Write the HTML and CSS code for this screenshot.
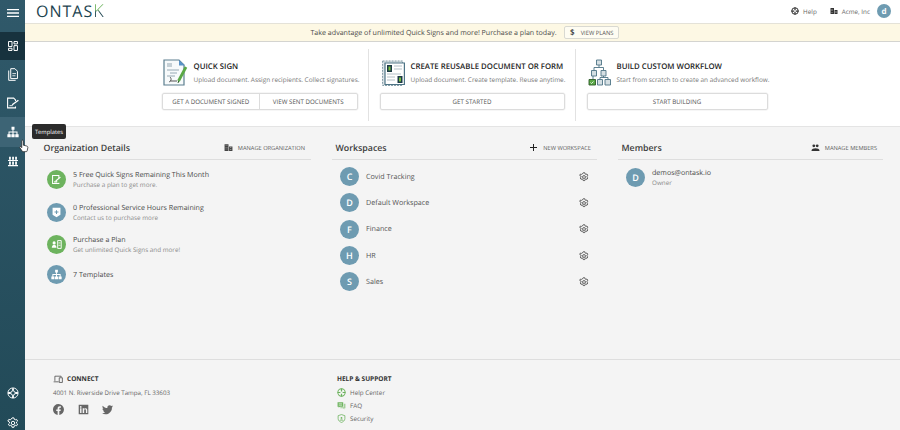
FILE: index.html
```html
<!DOCTYPE html>
<html lang="en">
<head>
<meta charset="utf-8">
<title>OnTask</title>
<link rel="stylesheet" href="styles.css">
</head>
<body>
<svg class="defs" width="0" height="0" aria-hidden="true">
  <defs>
    <symbol id="i-sitemap" viewBox="0 0 16 16"><path fill="currentColor" d="M6 1h4v4H8.600v2.200H14V11h1.500v4h-4.500v-4h1.600V8.600H8.700V11h1.500v4H5.800v-4h1.500V8.600H3.400V11H5v4H.5v-4H2V7.200h5.300V5H6z"/></symbol>
    <symbol id="i-gear" viewBox="0 0 16 16"><path fill="none" stroke="currentColor" stroke-width="1.300" d="M6.700 1.200h2.600l.4 1.900 1.300.7 1.800-.6 1.300 2.200-1.400 1.300v1.500l1.400 1.300-1.300 2.200-1.800-.6-1.300.7-.4 1.900H6.700l-.4-1.900-1.300-.7-1.800.6-1.300-2.200 1.400-1.300V6.700L1.100 5.400l1.300-2.200 1.800.6L5.500 3.100z"/><circle cx="8" cy="8" r="2.300" fill="none" stroke="currentColor" stroke-width="1.300"/></symbol>
    <symbol id="i-building" viewBox="0 0 16 16"><path fill="currentColor" d="M1 2h7v12H1zM9 6h6v8H9z"/><path fill="#f4f4f4" d="M3 4h1v1H3zM5 4h1v1H5zM3 7h1v1H3zM5 7h1v1H5zM3 10h1v1H3zM5 10h1v1H5zM11 8h2v1h-2zM11 11h2v1h-2z"/></symbol>
  </defs>
</svg>
<div class="app">
  <nav class="sidebar">
    <div class="nav-item nav-burger">
      <svg class="nav-burger-ico" viewBox="0 0 12 8"><path fill="#fff" d="M0 0h12v1.300H0zM0 3.350h12v1.300H0zM0 6.700h12V8H0z"/></svg>
    </div>
    <div class="nav-item nav-active">
      <svg class="nav-ico" viewBox="0 0 11 11"><path fill="none" stroke="#fff" stroke-width="1.100" d="M.6.600h3.800v5.500H.6zM6.600.600h3.800v2.600H6.600zM6.600 5.100h3.800v5.300H6.600zM.6 8h3.800v2.400H.6z"/></svg>
    </div>
    <div class="nav-item">
      <svg class="nav-ico-tall" viewBox="0 0 11 14"><path fill="none" stroke="#fff" stroke-width="1.100" d="M3 .6h4.600L10.400 3.400V11.500H3zM.8 2.600V13.400H8.400"/><path stroke="#fff" stroke-width=".9" d="M4.800 6h4M4.800 8.400h3.400"/></svg>
    </div>
    <div class="nav-item">
      <svg class="nav-ico-wide" viewBox="0 0 12 11"><path fill="none" stroke="#fff" stroke-width="1.100" d="M8.500 3.600V2.400L6.700.6H.6v9.800h7.900V9"/><path stroke="#fff" stroke-width="1.400" d="M5.200 7.300l6.200-4.600"/><path stroke="#fff" stroke-width=".9" d="M2.400 8.200h3.400"/></svg>
    </div>
    <div class="nav-item nav-hover">
      <svg class="nav-ico-wide" viewBox="0 0 16 16"><use href="#i-sitemap" color="#fff"/></svg>
    </div>
    <div class="nav-item nav-last">
      <svg class="nav-ico-tall" viewBox="0 0 14 14"><path fill="#fff" d="M0 5h14v1.200H0zM0 12h14v1.500H0zM1.500 .5h2.500v4H1.500zM5.800 .5h2.500v4H5.800zM10 .5h2.500v4H10zM1.500 7h2.500v4.500H1.500zM5.800 7h2.500v4.500H5.800zM10 7h2.500v4.500H10z"/></svg>
    </div>
    <div class="nav-spacer"></div>
    <div class="nav-item nav-foot">
      <svg class="nav-ico-wide" viewBox="0 0 16 16"><circle cx="8" cy="8" r="6.800" fill="none" stroke="#fff" stroke-width="1.200"/><circle cx="8" cy="8" r="2.900" fill="none" stroke="#fff" stroke-width="1.200"/><path stroke="#fff" stroke-width="2.400" d="M8 1.500v3.500M8 11v3.500M1.500 8H5M11 8h3.500"/></svg>
    </div>
    <div class="nav-item nav-foot nav-cut">
      <svg class="nav-ico-wide" viewBox="0 0 16 16"><use href="#i-gear" color="#fff"/></svg>
    </div>
  </nav>
  <div class="tooltip">Templates</div>
  <svg class="cursor" viewBox="0 0 12 16"><path fill="#fff" stroke="#222" stroke-width=".9" d="M3.500 1.200c.8-.6 1.700 0 1.700.8V7l4 1c1 .3 1.600 1 1.400 2l-.8 3.800c-.1.700-.6 1-1.200 1H5c-.5 0-.9-.2-1.200-.7L1 10c-.5-.9.600-1.800 1.400-1l.9 1V2c0-.3 0-.6.200-.8z"/></svg>

  <div class="content">
    <header class="topbar">
      <div class="logo">ONTAS<span class="logo-k">K</span></div>
      <div class="top-right">
        <span class="top-link"><svg class="top-ico" viewBox="0 0 16 16"><circle cx="8" cy="8" r="6.500" fill="none" stroke="#333" stroke-width="2"/><path stroke="#333" stroke-width="2.500" d="M8 1v14M1 8h14"/><circle cx="8" cy="8" r="2" fill="#fff"/></svg>Help</span>
        <span class="top-link"><svg class="top-ico" viewBox="0 0 16 16"><use href="#i-building" color="#333"/></svg>Acme, Inc</span>
        <span class="avatar-small">d</span>
      </div>
    </header>
    <div class="banner">
      <span>Take advantage of unlimited Quick Signs and more! Purchase a plan today.</span>
      <span class="plans-btn"><b class="dollar">$</b>VIEW PLANS</span>
    </div>
    <section class="actions">
      <div class="action action-1">
        <div class="action-head">
          <svg class="action-ico ico-a" viewBox="0 0 25 27">
            <path fill="#f7fafb" stroke="#5c7f8f" stroke-width="1.200" d="M1 1h15l5 5v20H1z"/>
            <path fill="#5a93c8" d="M16 1l6 5.500h-6z"/>
            <path fill="#c5d0d6" d="M4 4h5v4H4z"/>
            <path stroke="#8aa0ab" stroke-width=".9" d="M4 11h12M7 14h7M4 17h8"/>
            <path fill="none" stroke="#444" stroke-width=".9" d="M7 18c2 2 1 4-1 5M7 22h7"/>
            <path stroke="#5aa845" stroke-width="2.800" d="M15.500 22l7.500-14"/>
            <path stroke="#2c5a28" stroke-width="1" d="M15 24l.7-2"/>
          </svg>
          <div class="action-text">
            <div class="action-title">QUICK SIGN</div>
            <div class="action-sub">Upload document. Assign recipients. Collect signatures.</div>
          </div>
        </div>
        <div class="btn-group"><span class="btn">GET A DOCUMENT SIGNED</span><span class="btn">VIEW SENT DOCUMENTS</span></div>
      </div>
      <div class="action action-2">
        <div class="action-head">
          <svg class="action-ico ico-b" viewBox="0 0 23 27">
            <path fill="#dfe6e9" stroke="#7d97a3" stroke-dasharray="2 1" d="M.6 2h20v24.400H.6z"/>
            <path fill="#fff" stroke="#4e7486" stroke-width="1.200" d="M3 4h19.400v21.500H3z"/>
            <path fill="#1d3b47" d="M5 6h5v7H5z"/><path fill="#7ac142" d="M6.500 7.500h2v4h-2z"/>
            <path fill="#1d3b47" d="M15.500 17h5v7h-5z"/><path fill="#7ac142" d="M17 18.500h2v4h-2z"/>
            <path stroke="#aab8bf" stroke-width=".9" d="M12 7h8M12 10h8M5 15h14M5 18h8M5 21h8"/>
          </svg>
          <div class="action-text">
            <div class="action-title">CREATE REUSABLE DOCUMENT OR FORM</div>
            <div class="action-sub">Upload document. Create template. Reuse anytime.</div>
          </div>
        </div>
        <div class="btn-group"><span class="btn">GET STARTED</span></div>
      </div>
      <div class="action action-3">
        <div class="action-head">
          <svg class="action-ico ico-b" viewBox="0 0 23 27">
            <path fill="none" stroke="#4e7486" stroke-width=".9" d="M11 6v2.500M6 8.500h9.500M6 8.500v3M15.500 8.500v3M5 17v3M15.500 17v1.500M12 18.500h8M12 18.500v2M20 18.500v2"/>
            <path fill="#d5dfe3" stroke="#4e7486" stroke-width=".9" d="M8.500 1h5v5h-5zM3.500 11.500h5v5.500h-5zM13 11.500h5v5.500h-5zM9.500 20.500h5v5.500h-5zM17 20.500h5.500v5.500H17z"/>
            <path fill="#5aa845" stroke="#2c5a28" stroke-width=".9" d="M1 20.500h6.500v5.500H1z"/>
            <path fill="none" stroke="#fff" stroke-width=".8" d="M2.500 23.500l1 1 2-2"/>
          </svg>
          <div class="action-text">
            <div class="action-title">BUILD CUSTOM WORKFLOW</div>
            <div class="action-sub">Start from scratch to create an advanced workflow.</div>
          </div>
        </div>
        <div class="btn-group"><span class="btn">START BUILDING</span></div>
      </div>
    </section>
    <main class="columns">
      <section class="col">
        <div class="col-head">
          <h2>Organization Details</h2>
          <span class="col-link"><svg class="col-ico" viewBox="0 0 16 16"><use href="#i-building" color="#444"/></svg>MANAGE ORGANIZATION</span>
        </div>
        <ul class="org-list">
          <li class="org-row"><span class="circle green"><svg class="c-ico" viewBox="0 0 14 14"><path fill="none" stroke="#fff" stroke-width="1.300" d="M10 5V2H2v10h8v-1"/><path stroke="#fff" stroke-width="1.500" d="M6 9l6-5M4 10h4"/></svg></span>
            <div><div class="row-title">5 Free Quick Signs Remaining This Month</div><div class="row-sub">Purchase a plan to get more.</div></div></li>
          <li class="org-row"><span class="circle blue"><svg class="c-ico" viewBox="0 0 14 14"><path fill="#fff" d="M2 1h10v9l-5 3-5-3z"/><path stroke="#6e9bb1" stroke-width="1.300" d="M7 4v5M4.500 6.500h5"/></svg></span>
            <div><div class="row-title">0 Professional Service Hours Remaining</div><div class="row-sub">Contact us to purchase more</div></div></li>
          <li class="org-row"><span class="circle green"><svg class="c-ico" viewBox="0 0 14 14"><circle cx="4" cy="5" r="2" fill="#fff"/><path fill="#fff" d="M1 11c0-5 6-5 6 0z"/><path fill="none" stroke="#fff" stroke-width="1.200" d="M8.500 2h4.500v10H8.500z"/><path stroke="#fff" d="M9.500 5h2.500M9.500 8h2.500"/></svg></span>
            <div><div class="row-title">Purchase a Plan</div><div class="row-sub">Get unlimited Quick Signs and more!</div></div></li>
          <li class="org-row org-row-short"><span class="circle blue"><svg class="c-ico" viewBox="0 0 16 16"><use href="#i-sitemap" color="#fff"/></svg></span>
            <div><div class="row-title">7 Templates</div></div></li>
        </ul>
      </section>
      <section class="col">
        <div class="col-head">
          <h2>Workspaces</h2>
          <span class="col-link"><svg class="plus-ico" viewBox="0 0 7 7"><path stroke="#222" stroke-width="1" d="M3.500 0v7M0 3.500h7"/></svg>NEW WORKSPACE</span>
        </div>
        <ul class="ws-list">
          <li class="ws-row"><span class="circle blue">C</span><span class="ws-name">Covid Tracking</span><svg class="ws-gear" viewBox="0 0 16 16"><use href="#i-gear"/></svg></li>
          <li class="ws-row"><span class="circle blue">D</span><span class="ws-name">Default Workspace</span><svg class="ws-gear" viewBox="0 0 16 16"><use href="#i-gear"/></svg></li>
          <li class="ws-row"><span class="circle blue">F</span><span class="ws-name">Finance</span><svg class="ws-gear" viewBox="0 0 16 16"><use href="#i-gear"/></svg></li>
          <li class="ws-row"><span class="circle blue">H</span><span class="ws-name">HR</span><svg class="ws-gear" viewBox="0 0 16 16"><use href="#i-gear"/></svg></li>
          <li class="ws-row"><span class="circle blue">S</span><span class="ws-name">Sales</span><svg class="ws-gear" viewBox="0 0 16 16"><use href="#i-gear"/></svg></li>
        </ul>
      </section>
      <section class="col">
        <div class="col-head">
          <h2>Members</h2>
          <span class="col-link"><svg class="col-ico" viewBox="0 0 16 14"><circle cx="5" cy="4" r="2.500" fill="#333"/><circle cx="11" cy="4" r="2.500" fill="#333"/><path fill="#333" d="M1 12c0-5 14-5 14 0v1H1z"/></svg>MANAGE MEMBERS</span>
        </div>
        <ul class="ws-list">
          <li class="ws-row member"><span class="circle blue">D</span><div><div class="row-title">demos@ontask.io</div><div class="row-sub">Owner</div></div></li>
        </ul>
      </section>
    </main>
    <footer class="footer">
      <div class="foot-a">
        <div class="foot-title"><svg class="foot-ico" viewBox="0 0 16 12"><path fill="none" stroke="#333" stroke-width="1.100" d="M3 9V1.500h10V3M1 10.500h8M10 4h5v7.500h-5z"/></svg>CONNECT</div>
        <div class="foot-text">4001 N. Riverside Drive Tampa, FL 33603</div>
        <div class="socials">
          <svg class="soc" viewBox="0 0 16 16"><path fill="#666" d="M8 0a8 8 0 0 0-1.300 15.900v-5.600h-2V8h2V6.200c0-2 1.200-3.100 3-3.100.9 0 1.800.2 1.800.2v2h-1c-1 0-1.300.6-1.300 1.200V8h2.200l-.4 2.300H9.200v5.600A8 8 0 0 0 8 0z"/></svg>
          <svg class="soc" viewBox="0 0 16 16"><path fill="#666" fill-rule="evenodd" d="M1.500 1h13c.3 0 .5.200.5.500v13c0 .3-.2.500-.5.500h-13a.5.500 0 0 1-.5-.5v-13c0-.3.200-.5.500-.5zM3 6.300V13h2.100V6.300zM4 3a1.200 1.200 0 1 0 0 2.500A1.200 1.200 0 0 0 4 3zm2.800 3.300V13H9V9.600c0-1 .3-1.800 1.300-1.800s1.200 1 1.200 1.800V13h2V9.200c0-2-.6-3.100-2.600-3.100-1 0-1.600.5-1.900 1V6.300z"/></svg>
          <svg class="soc" viewBox="0 0 16 16"><path fill="#666" d="M16 3.300c-.6.300-1.200.4-1.900.5.700-.4 1.200-1 1.400-1.800-.6.400-1.300.6-2 .8A3.300 3.300 0 0 0 7.900 5.800C5.200 5.700 2.800 4.400 1.100 2.400c-.9 1.500-.4 3.400 1 4.400-.5 0-1-.2-1.500-.4 0 1.600 1.100 3 2.600 3.300-.5.100-1 .2-1.500.1.400 1.300 1.600 2.200 3.100 2.300A6.600 6.600 0 0 1 0 13.400 9.300 9.300 0 0 0 14.400 5c.6-.5 1.200-1 1.600-1.700z"/></svg>
        </div>
      </div>
      <div class="foot-b">
        <div class="foot-title">HELP &amp; SUPPORT</div>
        <div class="foot-link"><svg class="link-ico" viewBox="0 0 16 16"><circle cx="8" cy="8" r="6.500" fill="none" stroke="#6db35e" stroke-width="1.800"/><path stroke="#6db35e" stroke-width="2.200" d="M8 1v5M8 10v5M1 8h5M10 8h5"/></svg>Help Center</div>
        <div class="foot-link"><svg class="link-ico" viewBox="0 0 16 16"><path fill="#6db35e" d="M1 2h10v8H5l-2 2v-2H1z"/><path fill="#a5d09b" d="M12 5h3v8h-2v2l-2-2H6v-2h6z"/><path stroke="#fff" d="M3 5h6M3 7.500h6"/></svg>FAQ</div>
        <div class="foot-link"><svg class="link-ico" viewBox="0 0 16 16"><path fill="none" stroke="#6db35e" stroke-width="1.400" d="M8 1l6 2v5c0 3.500-3 6-6 7-3-1-6-3.500-6-7V3z"/><circle cx="8" cy="7" r="1.600" fill="#6db35e"/><path fill="#6db35e" d="M5 11.500c0-2.500 6-2.500 6 0z"/></svg>Security</div>
      </div>
    </footer>
  </div>
</div>
</body>
</html>
```
FILE: styles.css
```css
* { box-sizing: border-box; }
html, body { margin: 0; padding: 0; height: 100%; overflow: hidden; }
body { font-family: "Open Sans", "Liberation Sans", sans-serif; color: #4a4a4a; font-size: 7px; background: #f4f4f4; text-rendering: geometricPrecision; }
.defs { position: absolute; }
.app { position: relative; display: flex; width: 900px; height: 430px; overflow: hidden; }
ul { list-style: none; margin: 0; padding: 0; }
h2 { margin: 0; font-size: 8.800px; font-weight: 600; color: #3c3c3c; }

.sidebar { width: 25px; flex: none; display: flex; flex-direction: column; background: linear-gradient(#30596a, #224a58); }
.nav-item { height: 28.500px; flex: none; display: flex; align-items: center; justify-content: center; }
.nav-burger { height: 32px; padding-bottom: 6px; }
.nav-active { height: 28px; background: #17323e; }
.nav-hover { height: 30px; background: #3d6475; }
.nav-last { height: 28px; }
.nav-spacer { flex: 1; }
.nav-foot { height: 30px; }
.nav-cut { margin-bottom: -8px; }
.nav-burger-ico { width: 12px; height: 8px; }
.nav-ico { width: 10px; height: 10px; }
.nav-ico-tall { width: 10px; height: 13px; }
.nav-ico-wide { width: 12px; height: 12px; }

.tooltip { position: absolute; left: 32px; top: 124px; width: 34px; height: 15px; background: #2b2b2b; color: #fff; font-size: 5.800px; border-radius: 2px; display: flex; align-items: center; justify-content: center; z-index: 3; }
.cursor { position: absolute; left: 19px; top: 139px; width: 10px; height: 14px; z-index: 4; }

.content { flex: 1; min-width: 0; display: flex; flex-direction: column; }

.topbar { height: 23px; flex: none; background: #fff; display: flex; align-items: center; justify-content: space-between; padding: 0 9px 1px 11px; }
.logo { font-size: 16px; line-height: 1; letter-spacing: 1px; color: #1d4450; font-weight: 400; }
.logo-k { font-size: 18px; font-weight: 300; letter-spacing: 0; background: linear-gradient(#6db35e 45%, #1d4450 55%); -webkit-background-clip: text; background-clip: text; color: transparent; }
.top-right { display: flex; align-items: center; color: #666; font-size: 6.300px; }
.top-link { display: flex; align-items: center; gap: 4px; margin-right: 13px; }
.top-link + .top-link { margin-right: 7px; }
.top-ico { width: 8px; height: 8px; }
.avatar-small { width: 14px; height: 14px; border-radius: 50%; background: #6e9bb1; color: #fff; font-weight: 700; font-size: 8px; display: flex; align-items: center; justify-content: center; }

.banner { height: 19px; flex: none; background: #fdf8e4; border-top: 1px solid #e4e2d8; border-bottom: 1px solid #d4d4d0; display: flex; align-items: center; justify-content: center; gap: 7px; font-size: 7.100px; color: #4a4a4a; padding-left: 4px; }
.plans-btn { height: 13px; padding: 0 4px 0 5.500px; background: #fefcf2; border: 1px solid #d9d9d2; border-radius: 2px; font-size: 5.800px; color: #555; display: flex; align-items: center; }
.dollar { font-size: 8px; font-weight: 600; color: #333; margin-right: 6px; }

.actions { height: 85px; flex: none; background: #fff; display: flex; justify-content: center; padding: 7px 0 0 4px; border-bottom: 1px solid #e4e4e4; }
.action { height: 72px; display: flex; flex-direction: column; padding: 0 10px 0 11px; border-left: 1px solid #e2e2e2; }
.action-1 { border-left: 0; padding-left: 0; width: 206px; }
.action-2 { width: 207px; }
.action-3 { width: 193px; padding-right: 0; }
.action-head { height: 38px; display: flex; align-items: center; gap: 6px; padding-left: 1px; padding-top: 8px; }
.action-2 .action-head { padding-left: 2px; }
.action-ico { height: 27px; flex: none; }
.ico-a { width: 25px; }
.ico-b { width: 23px; }
.action-text { padding-top: 2px; }
.action-title { font-size: 7.800px; font-weight: 600; color: #222; line-height: 11px; }
.action-sub { font-size: 6.450px; color: #777; line-height: 11px; margin-top: 1px; white-space: nowrap; }
.btn-group { display: flex; height: 17px; margin-top: 6px; border: 1px solid #dcdcdc; border-radius: 2px; box-shadow: 0 0 0 .5px #eee; }
.btn { flex: 1; display: flex; align-items: center; justify-content: center; font-size: 6.200px; color: #555; white-space: nowrap; }
.btn + .btn { border-left: 1px solid #dcdcdc; }

.columns { flex: 1; min-height: 0; display: grid; grid-template-columns: 271px 265px 265px; gap: 21px; padding: 9px 0 0 15px; }
.col-head { height: 24px; display: flex; align-items: center; justify-content: space-between; padding: 0 6px 0 3.500px; border-bottom: 1px solid #dedede; }
.col-link { display: flex; align-items: center; gap: 5px; font-size: 5.700px; color: #5c5c5c; }
.col-ico { width: 9px; height: 9px; }
.plus-ico { width: 7px; height: 7px; margin-right: 1px; }

.org-list { padding: 3.500px 0 0 7px; }
.org-row { height: 32.500px; display: flex; align-items: center; gap: 7px; }
.org-row-short { height: 27.500px; }
.circle { width: 19px; height: 19px; flex: none; border-radius: 50%; display: flex; align-items: center; justify-content: center; color: #fff; font-size: 9px; font-weight: 600; }
.green { background: #6db35e; }
.blue { background: #6e9bb1; }
.c-ico { width: 11px; height: 11px; }
.row-title { font-size: 7.100px; line-height: 10px; color: #4a4a4a; white-space: nowrap; }
.row-sub { font-size: 6.300px; line-height: 9px; color: #8a8a8a; white-space: nowrap; }

.ws-list { padding: 3.500px 0 0 8px; }
.ws-row { height: 26.300px; display: flex; align-items: center; gap: 7px; padding-right: 8px; }
.ws-name { flex: 1; font-size: 7.200px; color: #555; }
.ws-gear { width: 10px; height: 10px; color: #444; }
.member { height: 27px; }

.footer { height: 71px; flex: none; display: flex; border-top: 1px solid #dedede; padding: 14px 0 0 28px; }
.foot-a { width: 284px; }
.foot-title { display: flex; align-items: center; gap: 4px; height: 9px; font-size: 6.500px; font-weight: 700; color: #333; }
.foot-ico { width: 10px; height: 8px; }
.foot-text { font-size: 6.200px; color: #666; margin-top: 5px; line-height: 9px; }
.socials { display: flex; gap: 13.500px; margin-top: 6.500px; }
.soc { width: 11px; height: 11px; }
.foot-link { display: flex; align-items: center; gap: 4px; height: 13.200px; font-size: 6.300px; color: #666; }
.foot-title + .foot-link { margin-top: 3px; }
.link-ico { width: 9px; height: 9px; }
```
